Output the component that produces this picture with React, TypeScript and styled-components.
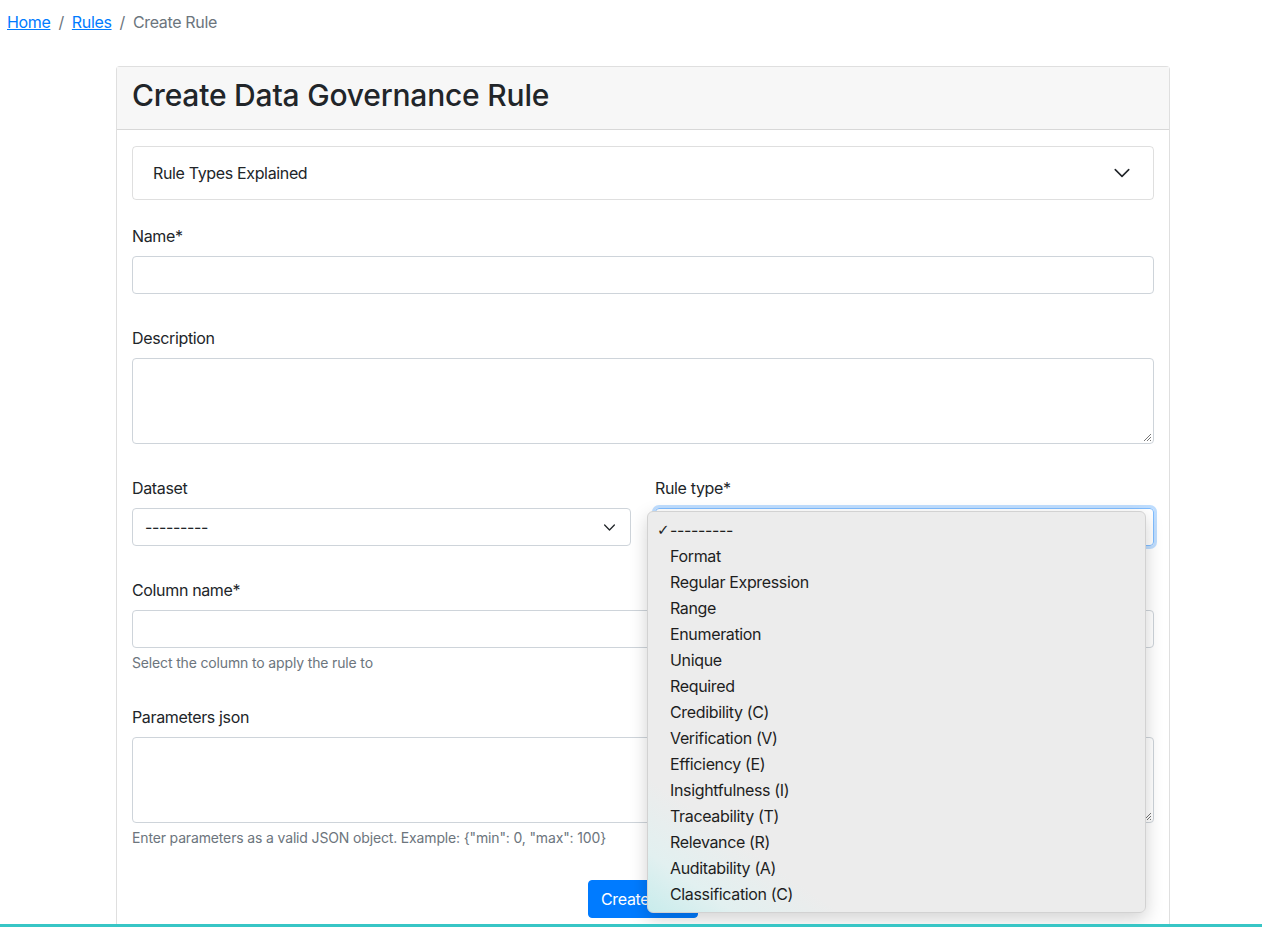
import React from "react";
import styled, { createGlobalStyle } from "styled-components";

const Global = createGlobalStyle`
  html, body { margin: 0; padding: 0; background: #fff; }
  body {
    font-family: Inter, "Liberation Sans", "Noto Sans", sans-serif;
    font-size: 16px;
    line-height: 1.5;
    letter-spacing: -0.35px;
    color: #212529;
    overflow: hidden;
  }
  * { box-sizing: border-box; }
`;

const Page = styled.div`
  height: 927px;
  overflow: hidden;
  position: relative;
`;

const Breadcrumb = styled.nav`
  display: flex;
  align-items: center;
  padding: 0 0 0 7px;
  height: 44px;
  font-size: 16px;
  color: #6c757d;
`;

const Crumb = styled.a`
  color: #007bff;
  text-decoration: underline;
`;

const Sep = styled.span`
  padding: 0 8px;
  color: #6c757d;
`;

const Main = styled.main`
  padding: 22px 0 0 116px;
`;

const Card = styled.section`
  width: 1054px;
  border: 1px solid rgba(0, 0, 0, 0.125);
  border-radius: 4px;
  background: #fff;
  min-height: 900px;
`;

const CardHeader = styled.header`
  background: #f7f7f7;
  border-bottom: 1px solid rgba(0, 0, 0, 0.125);
  padding: 9px 15px 15px;
`;

const Title = styled.h2`
  margin: 0;
  font-size: 30px;
  font-weight: 500;
  line-height: 38px;
  letter-spacing: -0.2px;
`;

const CardBody = styled.div`
  padding: 16px 15px;
`;

const Accordion = styled.div`
  height: 54px;
  border: 1px solid rgba(0, 0, 0, 0.125);
  border-radius: 4px;
  display: flex;
  align-items: center;
  justify-content: space-between;
  padding: 0 22px 0 20px;
  margin-bottom: 24px;
`;

const Group = styled.div`
  margin-bottom: 32px;
`;

const Row = styled.div`
  display: grid;
  grid-template-columns: 1fr 1fr;
  column-gap: 24px;
`;

const Label = styled.label`
  display: block;
  margin-bottom: 8px;
  line-height: 24px;
`;

const Input = styled.div`
  height: 38px;
  border: 1px solid #ced4da;
  border-radius: 4px;
  background: #fff;
`;

const TextArea = styled.div`
  height: 86px;
  border: 1px solid #ced4da;
  border-radius: 4px;
  position: relative;
`;

const Grip = styled.svg`
  position: absolute;
  right: 1px;
  bottom: 1px;
`;

const Select = styled.div<{ $focus?: boolean }>`
  height: 38px;
  border: 1px solid ${(p) => (p.$focus ? "#80bdff" : "#ced4da")};
  border-radius: 4px;
  box-shadow: ${(p) => (p.$focus ? "0 0 0 3px rgba(0,123,255,.25)" : "none")};
  display: flex;
  align-items: center;
  justify-content: space-between;
  padding: 0 14px 0 12px;
  font-size: 16px;
`;

const Help = styled.small`
  display: block;
  margin-top: 4px;
  font-size: 14px;
  line-height: 21px;
  letter-spacing: -0.15px;
  color: #6c757d;
`;

const Actions = styled.div`
  display: flex;
  justify-content: center;
`;

const Button = styled.button`
  height: 38px;
  padding: 0 12px;
  border: 1px solid #007bff;
  background: #007bff;
  color: #fff;
  border-radius: 4px;
  font-family: inherit;
  font-size: 16px;
  letter-spacing: -0.35px;
`;

const RuleField = styled.div`
  position: relative;
`;

const Dropdown = styled.ul`
  position: absolute;
  top: 3px;
  left: -8px;
  width: 499px;
  margin: 0;
  padding: 5px 0;
  list-style: none;
  background: linear-gradient(35deg, #c8ecec 0%, #e2f0f0 8%, #ececec 18%, #ececec 100%);
  border: 1px solid #d2d2d2;
  border-radius: 6px;
  box-shadow: 0 6px 18px rgba(0, 0, 0, 0.18);
  z-index: 5;
`;

const Option = styled.li`
  display: flex;
  align-items: center;
  height: 26px;
  padding-left: 22px;
  position: relative;
  font-size: 16px;
  color: #1e1e1e;
`;

const Check = styled.span`
  position: absolute;
  left: 9px;
  font-size: 15px;
  font-family: "DejaVu Sans", sans-serif;
`;

const BottomBar = styled.div`
  position: fixed;
  left: 0;
  right: 0;
  bottom: 0;
  height: 3px;
  background: #38c6c6;
  z-index: 10;
`;

const Chevron = ({ size, stroke }: { size: number; stroke: number }) => (
  <svg width={size} height={size} viewBox="0 0 16 16" fill="none">
    <path d="M2 5l6 6 6-6" stroke="#212529" strokeWidth={stroke} strokeLinecap="round" strokeLinejoin="round" />
  </svg>
);

const ResizeGrip = () => (
  <Grip width="10" height="10" viewBox="0 0 10 10">
    <path d="M9 2L2 9M9 5L5 9M9 8L8 9" stroke="#777" strokeWidth="1" />
  </Grip>
);

const options = [
  "Format",
  "Regular Expression",
  "Range",
  "Enumeration",
  "Unique",
  "Required",
  "Credibility (C)",
  "Verification (V)",
  "Efficiency (E)",
  "Insightfulness (I)",
  "Traceability (T)",
  "Relevance (R)",
  "Auditability (A)",
  "Classification (C)",
];

export default function App() {
  return (
    <Page>
      <Global />
      <Breadcrumb>
        <Crumb href="#">Home</Crumb>
        <Sep>/</Sep>
        <Crumb href="#">Rules</Crumb>
        <Sep>/</Sep>
        <span>Create Rule</span>
      </Breadcrumb>
      <Main>
        <Card>
          <CardHeader>
            <Title>Create Data Governance Rule</Title>
          </CardHeader>
          <CardBody>
            <Accordion>
              <span>Rule Types Explained</span>
              <Chevron size={18} stroke={1.4} />
            </Accordion>
            <Group>
              <Label>Name*</Label>
              <Input />
            </Group>
            <Group>
              <Label>Description</Label>
              <TextArea>
                <ResizeGrip />
              </TextArea>
            </Group>
            <Row>
              <Group>
                <Label>Dataset</Label>
                <Select>
                  <span>---------</span>
                  <Chevron size={13} stroke={1.6} />
                </Select>
              </Group>
              <Group>
                <Label>Rule type*</Label>
                <RuleField>
                  <Select $focus />
                  <Dropdown>
                    <Option>
                      <Check>✓</Check>
                      ---------
                    </Option>
                    {options.map((o) => (
                      <Option key={o}>{o}</Option>
                    ))}
                  </Dropdown>
                </RuleField>
              </Group>
            </Row>
            <Group>
              <Label>Column name*</Label>
              <Input />
              <Help>Select the column to apply the rule to</Help>
            </Group>
            <Group>
              <Label>Parameters json</Label>
              <TextArea>
                <ResizeGrip />
              </TextArea>
              <Help>Enter parameters as a valid JSON object. Example: {'{"min": 0, "max": 100}'}</Help>
            </Group>
            <Actions>
              <Button>Create Rule</Button>
            </Actions>
          </CardBody>
        </Card>
      </Main>
      <BottomBar />
    </Page>
  );
}
